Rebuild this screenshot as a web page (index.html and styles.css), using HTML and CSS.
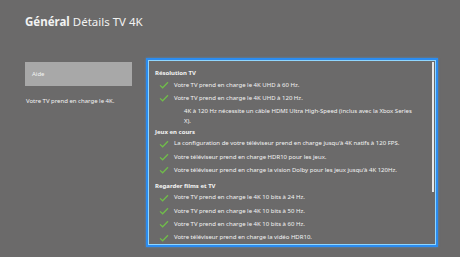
FILE: index.html
```html
<!DOCTYPE html>
<html lang="fr">
<head>
<meta charset="utf-8">
<link rel="stylesheet" href="styles.css">
</head>
<body>
<div class="screen">
  <h1 class="title"><b>Général</b> Détails TV 4K</h1>
  <div class="main">
    <div class="side">
      <div class="btn">Aide</div>
      <p class="side-text">Votre TV prend en charge le 4K.</p>
    </div>
    <div class="panel">
      <div class="scroll"></div>
      <div class="sec">Résolution TV</div>
      <div class="item"><svg class="chk" viewBox="0 0 12 10"><path d="M1 5.5 L4.3 8.5 L11 1.5"/></svg>Votre TV prend en charge le 4K UHD à 60 Hz.</div>
      <div class="item"><svg class="chk" viewBox="0 0 12 10"><path d="M1 5.5 L4.3 8.5 L11 1.5"/></svg>Votre TV prend en charge le 4K UHD à 120 Hz.</div>
      <p class="note">4K à 120 Hz nécessite un câble HDMI Ultra High-Speed (inclus avec la Xbox Series X).</p>
      <div class="sec">Jeux en cours</div>
      <div class="item"><svg class="chk" viewBox="0 0 12 10"><path d="M1 5.5 L4.3 8.5 L11 1.5"/></svg>La configuration de votre téléviseur prend en charge jusqu'à 4K natifs à 120 FPS.</div>
      <div class="item"><svg class="chk" viewBox="0 0 12 10"><path d="M1 5.5 L4.3 8.5 L11 1.5"/></svg>Votre téléviseur prend en charge HDR10 pour les jeux.</div>
      <div class="item"><svg class="chk" viewBox="0 0 12 10"><path d="M1 5.5 L4.3 8.5 L11 1.5"/></svg>Votre téléviseur prend en charge la vision Dolby pour les jeux jusqu'à 4K 120Hz.</div>
      <div class="sec sec2">Regarder films et TV</div>
      <div class="item"><svg class="chk" viewBox="0 0 12 10"><path d="M1 5.5 L4.3 8.5 L11 1.5"/></svg>Votre TV prend en charge le 4K 10 bits à 24 Hz.</div>
      <div class="item"><svg class="chk" viewBox="0 0 12 10"><path d="M1 5.5 L4.3 8.5 L11 1.5"/></svg>Votre TV prend en charge le 4K 10 bits à 50 Hz.</div>
      <div class="item"><svg class="chk" viewBox="0 0 12 10"><path d="M1 5.5 L4.3 8.5 L11 1.5"/></svg>Votre TV prend en charge le 4K 10 bits à 60 Hz.</div>
      <div class="item"><svg class="chk" viewBox="0 0 12 10"><path d="M1 5.5 L4.3 8.5 L11 1.5"/></svg>Votre téléviseur prend en charge la vidéo HDR10.</div>
    </div>
  </div>
</div>
</body>
</html>
```
FILE: styles.css
```css
* { box-sizing: border-box; }
html, body { margin: 0; padding: 0; }
body {
  width: 460px;
  height: 257px;
  overflow: hidden;
  background: #6b6a6a;
  font-family: "Noto Sans", "Open Sans", sans-serif;
  color: #f4f4f4;
}
.screen {
  padding: 15px 0 0 25px;
}
.title {
  margin: 0;
  font-size: 11.5px;
  font-weight: 400;
  line-height: 14px;
  color: #f2f2f2;
}
.title b { font-weight: 700; }
.main {
  display: flex;
  margin-top: 29px;
  gap: 14px;
}
.side {
  width: 107px;
  padding-top: 4px;
}
.btn {
  height: 24px;
  background: #a8a8a8;
  color: #f4f4f4;
  font-size: 6px;
  line-height: 24px;
  padding-left: 7px;
}
.side-text {
  margin: 11px 0 0 1px;
  font-size: 6px;
  line-height: 8px;
}
.panel {
  position: relative;
  width: 292px;
  height: 189px;
  border: 2px solid #2b8cf0;
  box-shadow: inset 0 0 0 1px #8fd6ff, 0 0 2px 0 rgba(60,160,255,0.6);
  padding: 8px 22px 0 7px;
  font-size: 6px;
}
.scroll {
  position: absolute;
  right: 2px;
  top: 2px;
  width: 2px;
  height: 130px;
  background: #e8e8e8;
}
.sec {
  font-weight: 700;
  line-height: 10px;
  height: 10px;
  margin-bottom: 0.5px;
}
.sec2 { margin-top: 4px; }
.item {
  display: flex;
  align-items: center;
  height: 13.2px;
  line-height: 13.2px;
  white-space: nowrap;
}
.chk {
  width: 10px;
  height: 8px;
  margin: 0 5px 0 4px;
  flex: none;
}
.chk path {
  fill: none;
  stroke: #70bd4a;
  stroke-width: 1.6;
}
.note {
  margin: 1px 0 1px 29px;
  line-height: 10px;
}
```
